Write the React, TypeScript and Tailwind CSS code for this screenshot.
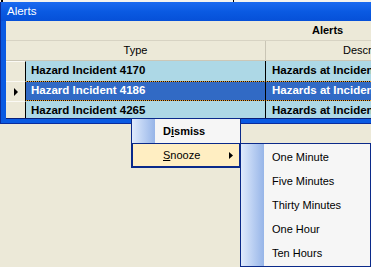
const rows = [
  { type: "Hazard Incident 4170", desc: "Hazards at Incident 4170", sel: false },
  { type: "Hazard Incident 4186", desc: "Hazards at Incident 4186", sel: true },
  { type: "Hazard Incident 4265", desc: "Hazards at Incident 4265", sel: false },
];

const snoozeOptions = ["One Minute", "Five Minutes", "Thirty Minutes", "One Hour", "Ten Hours"];

function Dots() {
  return <div className="h-px bg-[repeating-linear-gradient(90deg,#f0a030_0_1px,#101010_1px_2px)]" />;
}

function GridRow({ type, desc, sel }: { type: string; desc: string; sel: boolean }) {
  return (
    <div className="flex h-[20px] shrink-0">
      <div className="w-[20px] shrink-0 border-r border-black border-t border-t-[#fbfaf5] bg-[#ece9d8] flex items-center justify-center">
        {sel && (
          <svg width="4" height="8" viewBox="0 0 4 8">
            <path d="M0 0 L4 4 L0 8 Z" fill="#000" />
          </svg>
        )}
      </div>
      <div className={"flex flex-col flex-1 font-bold text-[11.5px] " + (sel ? "bg-[#316ac5] text-white" : "bg-[#add8e6] text-black")}>
        {sel && <Dots />}
        <div className="flex flex-1 items-center">
          <div className="w-[240px] h-full shrink-0 border-r border-black pl-[5px] flex items-center whitespace-nowrap">{type}</div>
          <div className="pl-[6px] whitespace-nowrap">{desc}</div>
        </div>
        {sel && <Dots />}
      </div>
    </div>
  );
}

export default function App() {
  return (
    <div className="relative w-[371px] h-[267px] overflow-hidden bg-[#ece9d8] font-['Liberation_Sans',Arial,sans-serif] text-[11px] text-black">
      {/* strip of parent form above the window */}
      <div className="h-[2px] bg-[#f4f3ee] flex">
        <div className="ml-[1px] w-[2px] bg-black" />
        <div className="ml-[230px] w-px bg-black" />
      </div>

      {/* Alerts window */}
      <div className="w-[700px] bg-[#0a5ae2] border-l border-b border-[#0a2c9c] pl-[5px] pb-[4px]">
        <div className="h-[19px] -ml-[5px] pl-[6px] pt-[1px] flex items-center bg-linear-to-b from-[#1a6af0] via-[#0a5ae2] to-[#0650d8] text-white text-[11.5px]">
          Alerts
        </div>
        <div className="h-[98px] overflow-hidden bg-[#ece9d8] border-b border-[#0a1e78] flex flex-col">
          <div className="h-[20px] shrink-0 border-b border-[#d7d3c3] flex items-center pl-[306px] font-bold">Alerts</div>
          <div className="h-[20px] shrink-0 border-b border-[#cbc7b7] flex">
            <div className="w-[260px] shrink-0 border-r border-[#c9c5b5] flex items-center justify-center">Type</div>
            <div className="w-[209px] shrink-0 flex items-center justify-center">Description</div>
          </div>
          {rows.map((r) => (
            <GridRow key={r.type} {...r} />
          ))}
        </div>
      </div>

      {/* context menu */}
      <div className="absolute left-[131px] top-[118px] w-[110px] h-[50px] border border-[#0b2a8a] bg-[#f6f6f6] flex flex-col">
        <div className="h-[24px] flex">
          <div className="w-[23px] bg-linear-to-r from-[#e0ebfc] to-[#97b5e8]" />
          <div className="pl-[8px] pt-[1px] flex items-center font-bold">
            D<span className="underline">i</span>smiss
          </div>
        </div>
        <div className="h-[24px] flex items-center bg-[#ffeec2] border border-[#0b2a8a]">
          <div className="w-[22px]" />
          <div className="pl-[8px] pt-[1px]">
            <span className="underline">S</span>nooze
          </div>
          <svg className="ml-auto mr-[6px]" width="4" height="7" viewBox="0 0 4 7">
            <path d="M0 0 L4 3.5 L0 7 Z" fill="#000" />
          </svg>
        </div>
      </div>

      {/* snooze submenu */}
      <div className="absolute left-[240px] top-[143px] w-[131px] h-[124px] border border-[#0b2a8a] bg-[#f6f6f6] flex">
        <div className="w-[23px] bg-linear-to-r from-[#e0ebfc] to-[#97b5e8]" />
        <div className="flex flex-col pt-[1px]">
          {snoozeOptions.map((o) => (
            <div key={o} className="h-[24px] pl-[8px] flex items-center whitespace-nowrap">
              {o}
            </div>
          ))}
        </div>
      </div>
    </div>
  );
}
